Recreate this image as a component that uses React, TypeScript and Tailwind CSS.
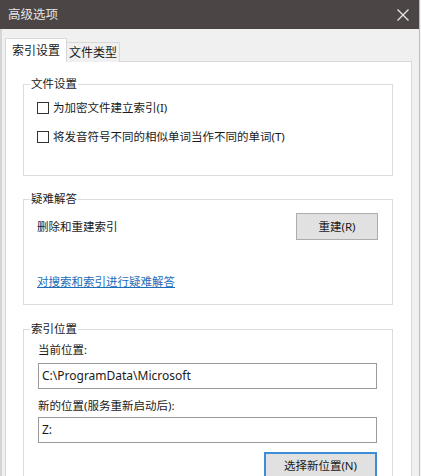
export default function App() {
  return (
    <div className="relative h-[476px] w-[421px] overflow-hidden bg-[#f4f4f4] font-['Noto_Sans','Noto_Sans_CJK_SC',sans-serif] text-[11.5px] leading-4 text-[#1a1a1a]">
      <div className="h-full w-[420px] border-r border-[#bdbdbd]">
        {/* title bar */}
        <div className="flex h-[29px] items-center justify-between bg-[#4b4645] pl-2 pr-[9px]">
          <span className="text-[12.5px] text-[#e4e4e4]">高级选项</span>
          <svg width="14" height="14" viewBox="0 0 14 14" className="text-[#e8e8e8]">
            <path d="M1.5 1.5 12.5 12.5M12.5 1.5 1.5 12.5" stroke="currentColor" strokeWidth="1.3" />
          </svg>
        </div>

        <div className="h-full border-l-2 border-[#d6d6d6] bg-[#f0f0f0] pl-[3px] pr-[7px] pt-[9px]">
          {/* tabs */}
          <div className="relative z-10 -mb-px flex items-end">
            <div className="flex h-[24px] w-[62px] items-center justify-center border border-b-0 border-[#d9d9d9] bg-white pt-[1px] text-[12px]">
              索引设置
            </div>
            <div className="flex h-[20px] w-[53px] items-center justify-center border border-b-0 border-l-0 border-[#d9d9d9] bg-[#f0f0f0] text-[12px]">
              文件类型
            </div>
          </div>

          {/* panel */}
          <div className="h-[420px] border border-[#d9d9d9] bg-white pl-[17px] pr-[18px] pt-[14px]">
            <fieldset className="border border-[#dcdcdc] pb-[30px]">
              <legend className="ml-[6px] px-[1px]">文件设置</legend>
              <div className="ml-[13px] mt-[8px] flex items-center gap-[4px]">
                <span className="h-[12px] w-[12px] border border-[#333333] bg-white" />
                <span>为加密文件建立索引(I)</span>
              </div>
              <div className="ml-[13px] mt-[13px] flex items-center gap-[4px]">
                <span className="h-[12px] w-[12px] border border-[#333333] bg-white" />
                <span>将发音符号不同的相似单词当作不同的单词(T)</span>
              </div>
            </fieldset>

            <fieldset className="mt-[15px] border border-[#dcdcdc] pb-[14px]">
              <legend className="ml-[6px] px-[1px]">疑难解答</legend>
              <div className="ml-[13px] mr-[14px] mt-[6px] flex items-center justify-between">
                <span>删除和重建索引</span>
                <button className="h-[27px] w-[82px] border border-[#adadad] bg-[#e1e1e1] text-[11.5px]">
                  重建(R)
                </button>
              </div>
              <div className="ml-[13px] mt-[34px]">
                <a className="text-[#1c6cb8] underline">对搜索和索引进行疑难解答</a>
              </div>
            </fieldset>

            <fieldset className="mt-[16px] border border-[#dcdcdc] pb-[20px]">
              <legend className="ml-[6px] px-[1px]">索引位置</legend>
              <div className="ml-[14px] mr-[15px]">
                <div className="mt-[5px]">当前位置:</div>
                <div className="mt-[5px] flex h-[26px] items-center border border-[#9a9a9a] bg-white pl-[3px] text-[12px]">
                  C:\ProgramData\Microsoft
                </div>
                <div className="mt-[9px]">新的位置(服务重新启动后):</div>
                <div className="mt-[3px] flex h-[26px] items-center border border-[#9a9a9a] bg-white pl-[3px] text-[12px]">
                  Z:
                </div>
                <div className="mt-[9px] flex justify-end">
                  <button className="h-[27px] w-[113px] border-2 border-[#3c8fd6] bg-[#e1e1e1] text-[11.5px]">
                    选择新位置(N)
                  </button>
                </div>
              </div>
            </fieldset>
          </div>
        </div>
      </div>
    </div>
  );
}
